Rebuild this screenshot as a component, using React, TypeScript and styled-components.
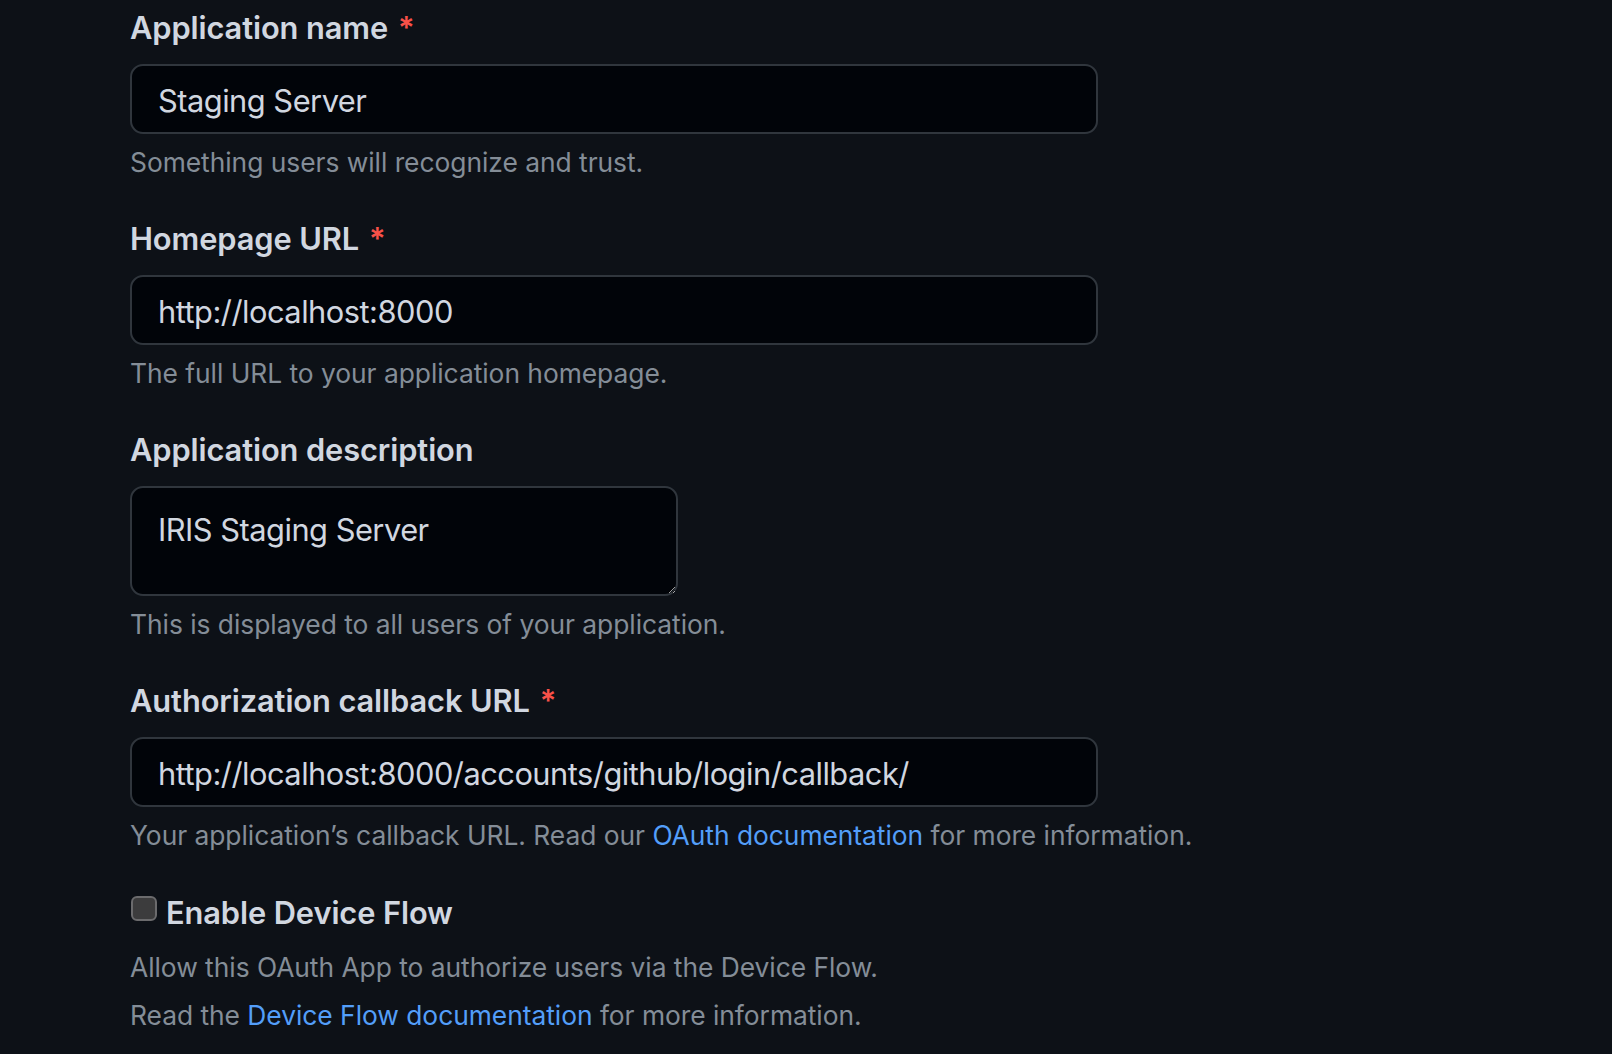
import React from "react";
import styled, { createGlobalStyle } from "styled-components";

const GlobalStyle = createGlobalStyle`
  html, body {
    margin: 0;
    padding: 0;
    background: #0d1117;
  }
  body {
    font-family: Inter, "Noto Sans", "Liberation Sans", sans-serif;
    color-scheme: dark;
    -webkit-font-smoothing: antialiased;
  }
`;

const Page = styled.main`
  box-sizing: border-box;
  min-height: 100vh;
  padding: 6px 0 0 130px;
  background: #0d1117;
`;

const Form = styled.form`
  display: flex;
  flex-direction: column;
  align-items: flex-start;
`;

const FormGroup = styled.div`
  display: flex;
  flex-direction: column;
  align-items: flex-start;
  margin-bottom: 34.5px;
`;

const Label = styled.label`
  font-size: 30.8px;
  font-weight: 600;
  line-height: 44px;
  letter-spacing: -0.1px;
  color: #d1d7e0;
  margin-bottom: 14px;
`;

const Required = styled.span`
  color: #f85149;
  margin-left: 10px;
`;

const TextInput = styled.input`
  box-sizing: border-box;
  width: 968px;
  height: 70px;
  padding: 2px 26px 0;
  background: #010409;
  border: 2px solid #30363d;
  border-radius: 13px;
  color: #d1d7e0;
  font-family: inherit;
  font-size: 30.8px;
  line-height: 44px;
  letter-spacing: -0.5px;
  outline: none;
`;

const TextArea = styled.textarea`
  box-sizing: border-box;
  width: 548px;
  height: 110px;
  padding: 20px 26px 0;
  background: #010409;
  border: 2px solid #30363d;
  border-radius: 13px;
  color: #d1d7e0;
  font-family: inherit;
  font-size: 30.8px;
  line-height: 44px;
  letter-spacing: -0.5px;
  outline: none;
  resize: vertical;
`;

const Note = styled.p`
  margin: 9px 0 0;
  font-size: 26.4px;
  line-height: 39.6px;
  letter-spacing: -0.04px;
  color: #848d97;
`;

const Link = styled.a`
  color: #539ef9;
  text-decoration: none;
`;

const CheckSection = styled.div`
  margin-top: 1px;
`;

const CheckRow = styled.label`
  display: flex;
  align-items: flex-start;
  gap: 9px;
  font-size: 30.8px;
  font-weight: 600;
  line-height: 44px;
  letter-spacing: -0.1px;
  color: #d1d7e0;
`;

const Checkbox = styled.input`
  appearance: none;
  box-sizing: border-box;
  width: 26px;
  height: 25px;
  margin: 5px 0 0 1px;
  background: #3c3c3d;
  border: 2px solid #6b6b6d;
  border-radius: 6px;
`;

const CheckNotes = styled.div`
  display: flex;
  flex-direction: column;
  gap: 8px;
  margin-top: 13px;
`;

const PlainNote = styled(Note)`
  margin: 0;
`;

export default function App() {
  return (
    <Page>
      <GlobalStyle />
      <Form onSubmit={(e) => e.preventDefault()}>
        <FormGroup>
          <Label htmlFor="app-name">
            Application name<Required>*</Required>
          </Label>
          <TextInput id="app-name" defaultValue="Staging Server" />
          <Note>Something users will recognize and trust.</Note>
        </FormGroup>

        <FormGroup>
          <Label htmlFor="homepage">
            Homepage URL<Required>*</Required>
          </Label>
          <TextInput id="homepage" defaultValue="http://localhost:8000" />
          <Note>The full URL to your application homepage.</Note>
        </FormGroup>

        <FormGroup>
          <Label htmlFor="desc">Application description</Label>
          <TextArea id="desc" defaultValue="IRIS Staging Server" />
          <Note>This is displayed to all users of your application.</Note>
        </FormGroup>

        <FormGroup>
          <Label htmlFor="callback">
            Authorization callback URL<Required>*</Required>
          </Label>
          <TextInput
            id="callback"
            defaultValue="http://localhost:8000/accounts/github/login/callback/"
          />
          <Note>
            Your application’s callback URL. Read our{" "}
            <Link href="#">OAuth documentation</Link> for more information.
          </Note>
        </FormGroup>

        <CheckSection>
          <CheckRow>
            <Checkbox type="checkbox" />
            Enable Device Flow
          </CheckRow>
          <CheckNotes>
            <PlainNote>Allow this OAuth App to authorize users via the Device Flow.</PlainNote>
            <PlainNote>
              Read the <Link href="#">Device Flow documentation</Link> for more information.
            </PlainNote>
          </CheckNotes>
        </CheckSection>
      </Form>
    </Page>
  );
}
